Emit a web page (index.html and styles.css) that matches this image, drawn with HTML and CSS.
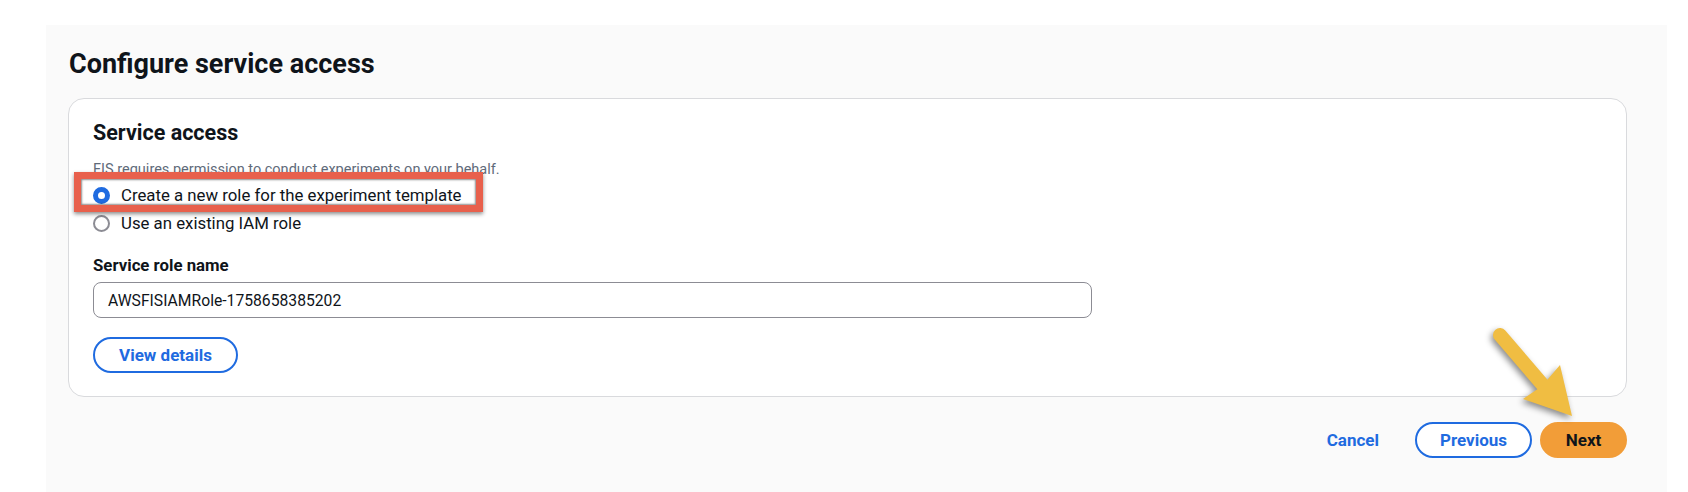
FILE: index.html
```html
<!DOCTYPE html>
<html lang="en">
<head>
<meta charset="utf-8">
<title>Configure service access</title>
<link rel="stylesheet" href="styles.css">
</head>
<body>
<div class="panel">
  <h1 class="title">Configure service access</h1>
  <section class="card">
    <h2 class="card-title">Service access</h2>
    <p class="desc">FIS requires permission to conduct experiments on your behalf.</p>
    <div class="radios">
      <label class="radio-row"><span class="radio checked"></span><span>Create a new role for the experiment template</span></label>
      <label class="radio-row"><span class="radio"></span><span>Use an existing IAM role</span></label>
    </div>
    <div class="field-label">Service role name</div>
    <div class="input">AWSFISIAMRole-1758658385202</div>
    <button class="btn btn-normal view-btn">View details</button>
    <div class="highlight"></div>
  </section>
  <div class="actions">
    <button class="btn btn-link">Cancel</button>
    <button class="btn btn-normal">Previous</button>
    <button class="btn btn-primary">Next</button>
  </div>
  <svg class="arrow" width="180" height="180" viewBox="0 0 180 180">
    <line x1="20" y1="25" x2="62" y2="74" stroke="#f0bd42" stroke-width="14" stroke-linecap="round"/>
    <polygon points="80,55 92,106 43,89 62,76" fill="#f0bd42"/>
  </svg>
</div>
</body>
</html>
```
FILE: styles.css
```css
* { box-sizing: border-box; }
html, body { margin: 0; padding: 0; background: #ffffff; }
body {
  font-family: Roboto, "Open Sans", Arial, sans-serif;
  color: #0f141a;
  width: 1688px;
  height: 492px;
  overflow: hidden;
}
.panel {
  position: relative;
  margin: 25px 0 0 46px;
  width: 1621px;
  height: 467px;
  background: #fafafa;
  padding: 22px 40px 0 22px;
  display: flex;
  flex-direction: column;
}
.title {
  margin: 0 0 17px 1px;
  font-size: 27px;
  line-height: 34px;
  font-weight: 700;
}
.card {
  position: relative;
  background: #ffffff;
  border: 1px solid #d9dadd;
  border-radius: 16px;
  height: 299px;
  padding: 21px 24px 0 24px;
  display: flex;
  flex-direction: column;
  align-items: flex-start;
}
.card-title {
  margin: 0;
  font-size: 21.5px;
  line-height: 26px;
  font-weight: 700;
}
.desc {
  margin: 14px 0 0 0;
  font-size: 14.5px;
  line-height: 20px;
  color: #5f6b7a;
}
.radios {
  margin-top: 1px;
  display: flex;
  flex-direction: column;
}
.radio-row {
  display: flex;
  align-items: center;
  height: 28px;
  gap: 11px;
  font-size: 16.8px;
  color: #0f141a;
}
.radio {
  width: 17px;
  height: 17px;
  border-radius: 50%;
  border: 2px solid #8c8c94;
  background: #fff;
  flex: none;
}
.radio.checked {
  border: 5.5px solid #1f6be0;
}
.field-label {
  margin-top: 17px;
  font-size: 16.8px;
  line-height: 22px;
  font-weight: 700;
}
.input {
  margin-top: 6px;
  width: 999px;
  height: 36px;
  border: 1px solid #8c8c94;
  border-radius: 8px;
  padding: 0 14px;
  display: flex;
  align-items: center;
  font-size: 15.7px;
  color: #0f141a;
}
.btn {
  font-family: Roboto, "Open Sans", Arial, sans-serif;
  font-size: 17px;
  font-weight: 700;
  height: 36px;
  border-radius: 18px;
  border: 2px solid transparent;
  background: none;
  padding: 0 22px;
  display: inline-flex;
  align-items: center;
  justify-content: center;
}
.btn-normal {
  border-color: #1f6be0;
  color: #1f6be0;
  background: #ffffff;
}
.view-btn {
  margin-top: 19px;
  width: 145px;
}
.btn-link {
  color: #1f6be0;
  padding: 0 26px;
}
.btn-primary {
  background: #f29d38;
  border-color: #f29d38;
  color: #0f141a;
  width: 87px;
}
.actions {
  margin-top: 25px;
  display: flex;
  justify-content: flex-end;
  gap: 8px;
}
.actions .btn-normal { width: 117px; }
.highlight {
  position: absolute;
  left: 5px;
  top: 73px;
  width: 409px;
  height: 40px;
  border: 7px solid #e8604c;
  box-shadow: 0 2px 4px rgba(0,0,0,0.45), inset 0 0 2px 1px rgba(0,0,0,0.45);
}
.arrow {
  position: absolute;
  left: 1434px;
  top: 285px;
  filter: drop-shadow(-2px 3px 3px rgba(0,0,0,0.45));
}
```
